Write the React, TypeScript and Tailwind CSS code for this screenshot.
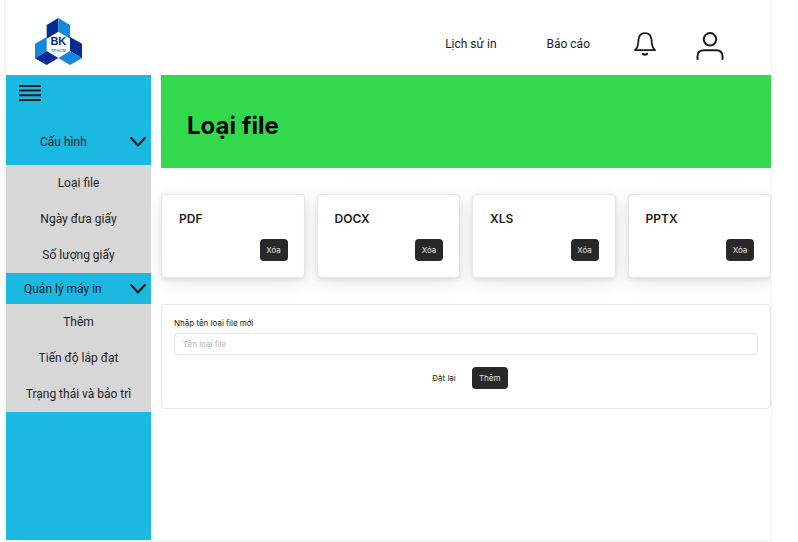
import React from "react";

function Logo() {
  return (
    <svg viewBox="0 0 141 141" className="size-[47px]" role="img" aria-label="BK TP.HCM">
      <path d="M70 0 35 21V62L70 41Z" fill="#032b91" />
      <path d="M70 0 105 21V62L70 41Z" fill="#1488db" />
      <path d="M0 77 35 57V99L0 121Z" fill="#1488db" />
      <path d="M0 121 35 99 70 120 35 141Z" fill="#032b91" />
      <path d="M141 77 105 57V99L141 121Z" fill="#032b91" />
      <path d="M141 121 105 99 70 120 105 141Z" fill="#1488db" />
      <text x="70" y="82" textAnchor="middle" fontSize="33" fontWeight="700" fill="#032b91" fontFamily="Liberation Sans, sans-serif">BK</text>
      <text x="70" y="103" textAnchor="middle" fontSize="12" fontWeight="700" fill="#1488db" fontFamily="Liberation Sans, sans-serif">TP.HCM</text>
    </svg>
  );
}

function BellIcon() {
  return (
    <svg viewBox="0 0 22 24" className="h-6 w-[22px]" fill="none" stroke="#1c1c1c" strokeWidth="1.8" strokeLinecap="round" strokeLinejoin="round" aria-hidden="true">
      <path d="M1 18.2H21C18.9 16.6 18.2 14.6 17.9 12L17.5 7.6C17.1 3.8 14.6 1.2 11 1.2S4.9 3.8 4.5 7.6L4.1 12C3.8 14.6 3.1 16.6 1 18.2Z" />
      <path d="M9 21.8Q11 23.4 13 21.8" strokeWidth="2.2" />
    </svg>
  );
}

function UserIcon() {
  return (
    <svg viewBox="0 0 28 28" className="size-7" fill="none" stroke="#1c1c1c" strokeWidth="2" strokeLinecap="round" aria-hidden="true">
      <circle cx="14" cy="7.3" r="6.2" />
      <path d="M1.5 27V24.5C1.5 20.5 4 18.3 8 18.3H20C24 18.3 26.5 20.5 26.5 24.5V27" />
    </svg>
  );
}

function MenuIcon() {
  return (
    <svg viewBox="0 0 22 18" className="h-[18px] w-[22px]" stroke="#1c1c1c" strokeWidth="2" aria-hidden="true">
      <path d="M0 2H22M0 6.5H22M0 11.3H22M0 16H22" />
    </svg>
  );
}

function ChevronIcon() {
  return (
    <svg viewBox="0 0 16 10" className="h-2.5 w-4" fill="none" stroke="#1c1c1c" strokeWidth="2.2" strokeLinecap="round" strokeLinejoin="round" aria-hidden="true">
      <path d="M1.2 1 8 8.5 14.8 1" />
    </svg>
  );
}

function SubMenu({ items }: { items: string[] }) {
  return (
    <ul className="bg-[#d7d7d7]">
      {items.map((item) => (
        <li key={item}>
          <a href="#" className="flex h-9 items-center justify-center">{item}</a>
        </li>
      ))}
    </ul>
  );
}

const fileTypes = ["PDF", "DOCX", "XLS", "PPTX"];

export default function App() {
  return (
    <div className="min-h-screen bg-white pr-[26px] pl-1 font-['Inter','Liberation_Sans',sans-serif] text-[#1c1c1c]">
      <div className="flex min-h-screen flex-col overflow-hidden border-r border-b-2 border-l-2 border-[#f5f5f5]">
        <header className="flex h-[75px] items-center justify-between pt-2 pr-[47px] pl-[29px] font-['Roboto',sans-serif] text-xs">
          <Logo />
          <nav className="flex items-center">
            <a href="#" className="mr-[50px] pt-1">Lịch sử in</a>
            <a href="#" className="mr-11 pt-1">Báo cáo</a>
            <button type="button" aria-label="Thông báo" className="mr-10 pt-1"><BellIcon /></button>
            <button type="button" aria-label="Tài khoản" className="pt-2"><UserIcon /></button>
          </nav>
        </header>

        <div className="flex flex-1 gap-2.5">
          <aside className="relative z-10 w-[145px] shrink-0 bg-[#1bb8e2] font-['Roboto',sans-serif] text-xs">
            <div className="flex h-[90px] flex-col justify-between pt-[9px] pb-[15px]">
              <button type="button" aria-label="Menu" className="ml-[13px] self-start"><MenuIcon /></button>
              <button type="button" className="flex items-center justify-between pr-[5px] pl-[34px]">
                <span>Cấu hình</span>
                <ChevronIcon />
              </button>
            </div>
            <SubMenu items={["Loại file", "Ngày đưa giấy", "Số lượng giấy"]} />
            <button type="button" className="flex h-[31px] w-full items-center justify-between pr-[5px] pl-[18px]">
              <span>Quản lý máy in</span>
              <ChevronIcon />
            </button>
            <SubMenu items={["Thêm", "Tiến độ lắp đạt", "Trạng thái và bảo trì"]} />
          </aside>

          <main className="min-w-0 flex-1">
            <div className="flex h-[93px] items-center bg-[#33d94c] pt-2 pl-[26px]">
              <h1 className="text-2xl leading-8 font-bold text-black">Loại file</h1>
            </div>

            <section className="mt-[26px] grid grid-cols-4 gap-3">
              {fileTypes.map((type) => (
                <article key={type} className="flex h-[84px] flex-col justify-between rounded-[4px] border border-[#e6e6e6] bg-white py-4 pr-4 pl-[17px] shadow-[0_2px_4px_rgba(0,0,0,0.08),0_5px_20px_rgba(0,0,0,0.09)]">
                  <h2 className="text-xs leading-4 font-semibold">{type}</h2>
                  <button type="button" className="h-[22px] w-7 self-end rounded-[4px] bg-[#282828] text-[8px] text-[#e0e0e0]">Xóa</button>
                </article>
              ))}
            </section>

            <form className="mt-[26px] flex h-[105px] flex-col rounded-[4px] border border-[#e8e8e8] px-3 pt-3 text-[8px]">
              <label htmlFor="file-type" className="leading-3">Nhập tên loại file mới</label>
              <input id="file-type" type="text" placeholder="Tên loại file" className="mt-1 h-[22px] w-full rounded-[4px] border border-[#e6e6e6] px-2 placeholder:text-[#b3b3b3]" />
              <div className="mt-3 flex items-center justify-center gap-4 pl-2">
                <button type="reset">Đặt lại</button>
                <button type="button" className="h-[22px] w-9 rounded-[4px] bg-[#282828] text-[#e0e0e0]">Thêm</button>
              </div>
            </form>
          </main>
        </div>
      </div>
    </div>
  );
}
